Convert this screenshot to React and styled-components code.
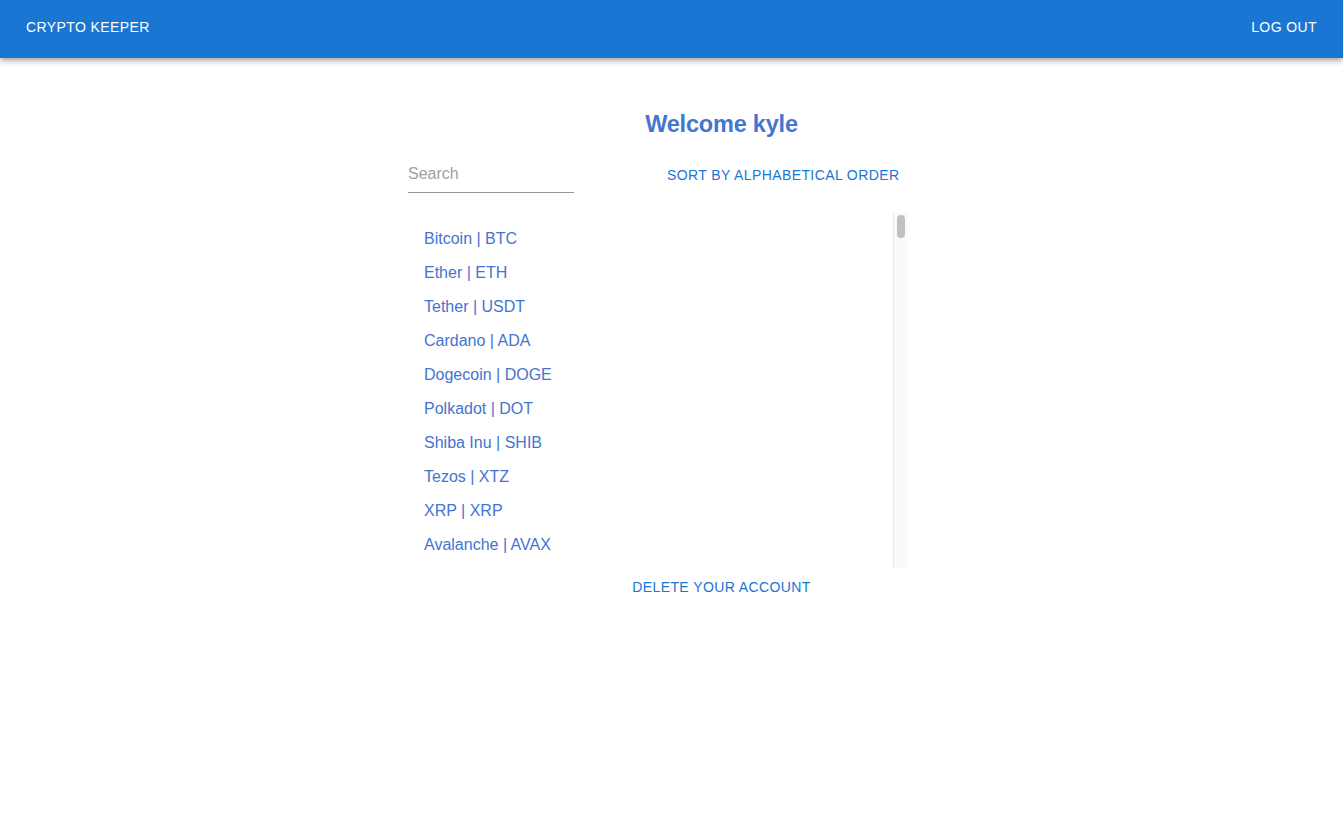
import React, { useState } from "react";
import styled, { createGlobalStyle } from "styled-components";

const GlobalStyle = createGlobalStyle`
  body {
    margin: 0;
    background: #fff;
    font-family: "Liberation Sans", Arial, sans-serif;
  }
`;

const coins = [
  ["Bitcoin", "BTC"], ["Ether", "ETH"], ["Tether", "USDT"], ["Cardano", "ADA"],
  ["Dogecoin", "DOGE"], ["Polkadot", "DOT"], ["Shiba Inu", "SHIB"], ["Tezos", "XTZ"],
  ["XRP", "XRP"], ["Avalanche", "AVAX"], ["Solana", "SOL"], ["Binance Coin", "BNB"],
  ["USD Coin", "USDC"], ["Litecoin", "LTC"], ["Chainlink", "LINK"], ["Bitcoin Cash", "BCH"],
  ["Stellar", "XLM"], ["Uniswap", "UNI"], ["Polygon", "MATIC"], ["VeChain", "VET"],
  ["Filecoin", "FIL"], ["TRON", "TRX"], ["Ethereum Classic", "ETC"], ["Monero", "XMR"],
  ["EOS", "EOS"], ["Cosmos", "ATOM"], ["Algorand", "ALGO"], ["Aave", "AAVE"],
  ["Maker", "MKR"], ["Compound", "COMP"], ["Dai", "DAI"], ["THETA", "THETA"],
  ["Fantom", "FTM"], ["Hedera", "HBAR"], ["Elrond", "EGLD"], ["NEAR Protocol", "NEAR"],
  ["Internet Computer", "ICP"], ["The Graph", "GRT"], ["Axie Infinity", "AXS"], ["Decentraland", "MANA"],
  ["The Sandbox", "SAND"], ["Enjin Coin", "ENJ"], ["Chiliz", "CHZ"], ["Zcash", "ZEC"],
  ["Dash", "DASH"], ["NEO", "NEO"], ["Waves", "WAVES"], ["Kusama", "KSM"],
  ["Helium", "HNT"], ["Harmony", "ONE"], ["IOTA", "MIOTA"], ["Klaytn", "KLAY"],
  ["PancakeSwap", "CAKE"], ["Sushi", "SUSHI"], ["Curve DAO", "CRV"], ["yearn.finance", "YFI"],
  ["Synthetix", "SNX"], ["1inch", "1INCH"], ["Loopring", "LRC"], ["Basic Attention Token", "BAT"],
  ["Zilliqa", "ZIL"], ["Qtum", "QTUM"], ["Ravencoin", "RVN"], ["Holo", "HOT"],
  ["Decred", "DCR"], ["Nano", "XNO"], ["Ontology", "ONT"], ["ICON", "ICX"],
  ["Siacoin", "SC"], ["DigiByte", "DGB"], ["0x", "ZRX"], ["OMG Network", "OMG"],
  ["Celo", "CELO"], ["Arweave", "AR"], ["Stacks", "STX"], ["Flow", "FLOW"],
  ["Kadena", "KDA"], ["Amp", "AMP"], ["Quant", "QNT"], ["Theta Fuel", "TFUEL"],
  ["BitTorrent", "BTT"], ["Celsius", "CEL"], ["Nexo", "NEXO"], ["Huobi Token", "HT"],
  ["KuCoin Token", "KCS"], ["OKB", "OKB"], ["Crypto.com Coin", "CRO"], ["FTX Token", "FTT"],
  ["UNUS SED LEO", "LEO"], ["TrueUSD", "TUSD"], ["Paxos Standard", "PAX"], ["Binance USD", "BUSD"],
  ["Wrapped Bitcoin", "WBTC"], ["Terra", "LUNA"], ["TerraUSD", "UST"], ["Bitcoin SV", "BSV"],
  ["Horizen", "ZEN"], ["Ankr", "ANKR"], ["Storj", "STORJ"], ["Ocean Protocol", "OCEAN"],
  ["Render", "RNDR"], ["Audius", "AUDIO"], ["Band Protocol", "BAND"], ["Kyber Network", "KNC"],
  ["Balancer", "BAL"], ["UMA", "UMA"], ["Ren", "REN"], ["Reserve Rights", "RSR"],
  ["Numeraire", "NMR"], ["Livepeer", "LPT"], ["Bancor", "BNT"], ["Golem", "GLM"],
  ["Status", "SNT"], ["Civic", "CVC"], ["Lisk", "LSK"], ["Steem", "STEEM"],
  ["Hive", "HIVE"], ["Verge", "XVG"], ["Syscoin", "SYS"], ["Nervos Network", "CKB"],
  ["Secret", "SCRT"], ["Oasis Network", "ROSE"], ["IoTeX", "IOTX"], ["Celer Network", "CELR"],
  ["Fetch.ai", "FET"], ["SingularityNET", "AGIX"], ["Origin Protocol", "OGN"], ["Mina", "MINA"],
  ["Gala", "GALA"], ["Illuvium", "ILV"], ["Smooth Love Potion", "SLP"], ["Immutable X", "IMX"],
  ["Kava", "KAVA"], ["Injective", "INJ"], ["Serum", "SRM"], ["Raydium", "RAY"],
  ["Alpha Finance", "ALPHA"], ["Perpetual Protocol", "PERP"], ["dYdX", "DYDX"], ["Convex Finance", "CVX"],
];

const LIST_HEIGHT = 355;
const THUMB_HEIGHT = 23;

const AppBar = styled.header`
  height: 58px;
  background-color: #1976d2;
  color: #fff;
  display: flex;
  align-items: center;
  justify-content: space-between;
  padding: 0 16px 0 16px;
  box-shadow: 0px 2px 4px -1px rgba(0, 0, 0, 0.2), 0px 4px 5px 0px rgba(0, 0, 0, 0.14),
    0px 1px 10px 0px rgba(0, 0, 0, 0.12);
  position: relative;
  z-index: 2;
`;

const BarButton = styled.button`
  background: transparent;
  border: none;
  color: #fff;
  font-family: "Liberation Sans", Arial, sans-serif;
  font-size: 14px;
  letter-spacing: 0.4px;
  text-transform: uppercase;
  padding: 6px 10px;
  cursor: pointer;
  margin-top: -4px;
`;

const Main = styled.main`
  width: 627px;
  margin: 0 auto;
  padding-left: 100px;
  display: flex;
  flex-direction: column;
`;

const Title = styled.h1`
  margin: 52px 0 0 0;
  text-align: center;
  font-size: 23.5px;
  line-height: 29px;
  font-weight: 700;
  color: #4475cf;
  letter-spacing: -0.2px;
`;

const Toolbar = styled.div`
  display: flex;
  align-items: flex-end;
  margin-top: 16px;
  height: 38px;
`;

const SearchField = styled.input`
  width: 166px;
  height: 37px;
  box-sizing: border-box;
  border: none;
  border-bottom: 1px solid #949494;
  outline: none;
  padding: 0 0 0 0;
  font-family: "Liberation Sans", Arial, sans-serif;
  font-size: 16px;
  color: #333;
  background: transparent;

  &::placeholder {
    color: #a0a0a0;
  }
`;

const TextButton = styled.button`
  background: transparent;
  border: none;
  color: #1976d2;
  font-family: "Liberation Sans", Arial, sans-serif;
  font-size: 14px;
  line-height: 24.5px;
  letter-spacing: 0.4px;
  text-transform: uppercase;
  padding: 6px 8px;
  cursor: pointer;
  margin-left: ${(p) => p.$offset || 0}px;
  margin-top: ${(p) => p.$top || 0}px;
  align-self: ${(p) => p.$align || "auto"};
`;

const ListFrame = styled.div`
  display: flex;
  width: 500px;
  height: ${LIST_HEIGHT}px;
  margin-top: 20px;
`;

const CoinList = styled.ul`
  flex: 1;
  list-style: none;
  margin: 0;
  padding: 9px 0 8px;
  overflow-y: scroll;
  scrollbar-width: none;

  &::-webkit-scrollbar {
    display: none;
  }
`;

const CoinItem = styled.li`
  padding: 5px 16px;
  font-size: 16px;
  line-height: 24px;
  color: #4474cf;
  cursor: pointer;
`;

const Track = styled.div`
  width: 15px;
  flex-shrink: 0;
  background: #fafafa;
  border-left: 1px solid #e8e8e8;
  padding: 2px 3px 2px 3px;
  box-sizing: border-box;
`;

const Thumb = styled.div`
  width: 8px;
  height: ${THUMB_HEIGHT}px;
  border-radius: 4px;
  background: #c1c1c1;
`;

export default function App() {
  const [search, setSearch] = useState("");
  const [scroll, setScroll] = useState(0);
  const shown = coins.filter(([name]) => name.toLowerCase().includes(search.toLowerCase()));

  const onScroll = (e) => {
    const el = e.currentTarget;
    const max = el.scrollHeight - el.clientHeight;
    setScroll(max > 0 ? el.scrollTop / max : 0);
  };

  return (
    <>
      <GlobalStyle />
      <AppBar>
        <BarButton>Crypto Keeper</BarButton>
        <BarButton>Log out</BarButton>
      </AppBar>
      <Main>
        <Title>Welcome kyle</Title>
        <Toolbar>
          <SearchField placeholder="Search" value={search} onChange={(e) => setSearch(e.target.value)} />
          <TextButton $offset={85} $top={2} $align="center">Sort by alphabetical order</TextButton>
        </Toolbar>
        <ListFrame>
          <CoinList onScroll={onScroll}>
            {shown.map(([name, symbol]) => (
              <CoinItem key={symbol + name}>
                {name} | {symbol}
              </CoinItem>
            ))}
          </CoinList>
          <Track>
            <Thumb style={{ marginTop: scroll * (LIST_HEIGHT - 4 - THUMB_HEIGHT) }} />
          </Track>
        </ListFrame>
        <TextButton $top={1} $align="center">Delete your account</TextButton>
      </Main>
    </>
  );
}
